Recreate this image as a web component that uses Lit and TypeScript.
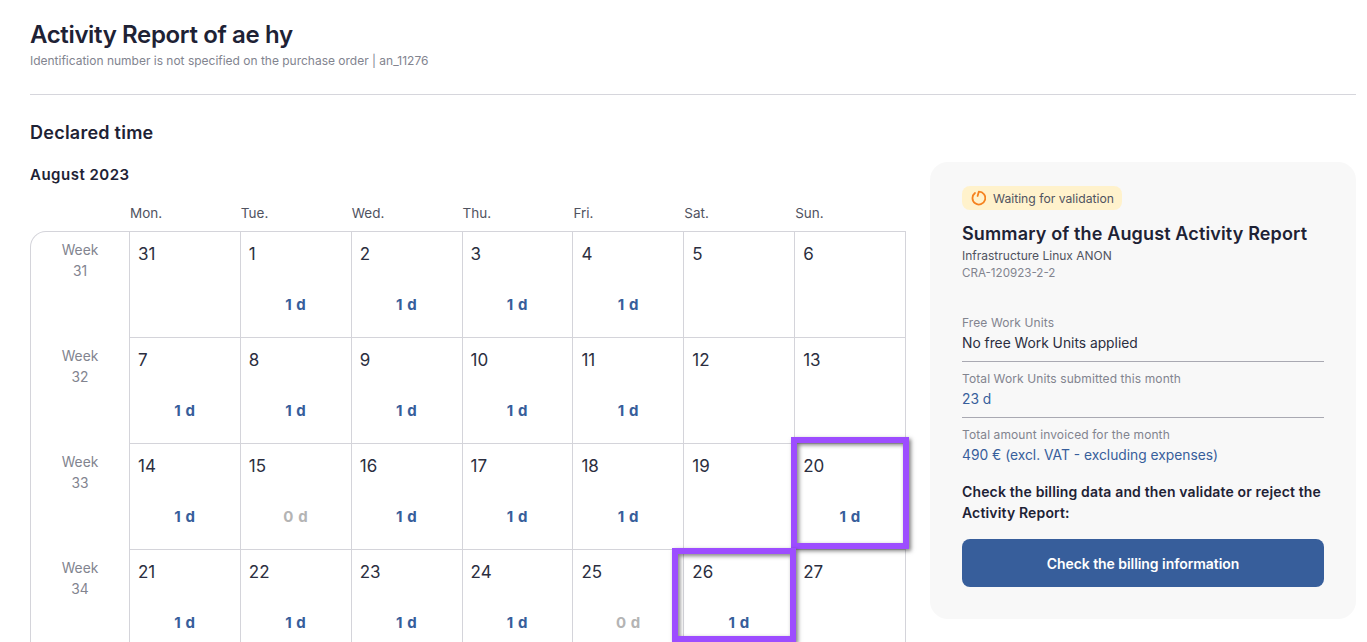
import { LitElement, html, css } from "lit";
import { customElement } from "lit/decorators.js";

type Cell = { n: number; v?: string };
const weeks: { w: number; days: Cell[] }[] = [
  { w: 31, days: [{ n: 31 }, { n: 1, v: "1 d" }, { n: 2, v: "1 d" }, { n: 3, v: "1 d" }, { n: 4, v: "1 d" }, { n: 5 }, { n: 6 }] },
  { w: 32, days: [{ n: 7, v: "1 d" }, { n: 8, v: "1 d" }, { n: 9, v: "1 d" }, { n: 10, v: "1 d" }, { n: 11, v: "1 d" }, { n: 12 }, { n: 13 }] },
  { w: 33, days: [{ n: 14, v: "1 d" }, { n: 15, v: "0 d" }, { n: 16, v: "1 d" }, { n: 17, v: "1 d" }, { n: 18, v: "1 d" }, { n: 19 }, { n: 20, v: "1 d" }] },
  { w: 34, days: [{ n: 21, v: "1 d" }, { n: 22, v: "1 d" }, { n: 23, v: "1 d" }, { n: 24, v: "1 d" }, { n: 25, v: "0 d" }, { n: 26, v: "1 d" }, { n: 27 }] },
];
const heads = ["Mon.", "Tue.", "Wed.", "Thu.", "Fri.", "Sat.", "Sun."];

@customElement("app-root")
export class AppRoot extends LitElement {
  static styles = css`
    :host { display: block; height: 642px; overflow: hidden; position: relative; background: #fff; font-family: Inter, "Noto Sans", sans-serif; color: #1e2235; }
    .page { padding: 20px 11px 0 30px; }
    h1 { margin: 0; font-size: 24px; line-height: 30px; font-weight: 600; letter-spacing: -0.36px; }
    .sub { font-size: 12px; line-height: 16px; color: #82848f; margin-top: 3px; letter-spacing: -0.01px; }
    hr { border: 0; border-top: 1px solid #d6d6dc; margin: 25px 0 0; }
    h2 { margin: 27px 0 0; font-size: 18px; line-height: 22px; font-weight: 600; letter-spacing: 0.25px; }
    .cols { display: grid; grid-template-columns: 876px 426px; gap: 24px; margin-top: 18px; align-items: start; }
    h3 { margin: 3px 0 0; font-size: 15px; line-height: 20px; font-weight: 600; letter-spacing: 0.5px; }
    .heads { display: grid; grid-template-columns: 99px repeat(7, 110.86px); margin-top: 19px; font-size: 13.5px; line-height: 18px; color: #50535f; }
    .heads span { padding-left: 1px; }
    .grid { display: grid; grid-template-columns: 98px repeat(7, 110.86px); width: 876px; box-sizing: border-box; margin-top: 9px; border-top: 1px solid #d4d4da; border-left: 1px solid #d4d4da; border-right: 1px solid #d4d4da; border-top-left-radius: 16px; }
    .week { grid-column: 1; height: 106px; text-align: center; font-size: 13.8px; line-height: 21px; color: #82848f; padding-top: 8px; box-sizing: border-box; }
    .day { height: 106px; box-sizing: border-box; border-left: 1px solid #d4d4da; border-bottom: 1px solid #d4d4da; padding: 10px 8px; position: relative; font-size: 17px; line-height: 24px; color: #2b2e40; }
    .val { position: absolute; left: 0; right: 0; top: 63px; text-align: center; font-size: 15px; line-height: 20px; font-weight: 700; color: #375e9b; letter-spacing: 0.6px; }
    .val.zero { color: #b4b4b4; }
    .panel { background: #f8f8f8; border-radius: 18px; padding: 24px 32px 32px; height: 457px; box-sizing: border-box; }
    .badge { display: inline-flex; align-items: center; gap: 7px; background: #fff2cc; border-radius: 8px; height: 24px; padding: 0 8px; font-size: 12.2px; color: #50535f; }
    .badge svg { display: block; }
    .ptitle { margin: 12px 0 0; font-size: 18px; line-height: 24px; font-weight: 600; letter-spacing: 0.14px; }
    .l1 { font-size: 12px; line-height: 18px; color: #50535f; margin-top: 1px; }
    .l2 { font-size: 11.6px; line-height: 18px; color: #82848f; margin-top: -1px; }
    .fields { margin-top: 33px; }
    .f { border-bottom: 1px solid #a9a9b2; padding-bottom: 8px; margin-bottom: 9px; }
    .f:last-child { border: 0; margin: 0; padding: 0; }
    .f .k { font-size: 12px; line-height: 16px; color: #82848f; letter-spacing: 0.1px; }
    .f .v { font-size: 13.8px; line-height: 20px; margin-top: 2px; color: #2b2e40; }
    .f .v.b { color: #375e9b; }
    .note { font-size: 14px; line-height: 21px; font-weight: 600; margin-top: 16px; letter-spacing: 0.15px; }
    .btn { display: flex; align-items: center; justify-content: center; height: 48px; margin-top: 16px; background: #375e9b; color: #fff; border-radius: 8px; font-size: 14px; font-weight: 600; letter-spacing: -0.06px; }
    .mark { position: absolute; box-sizing: border-box; border: 6px solid #9d4dff; box-shadow: 2px 2px 4px rgba(0,0,0,.5), inset 2px 2px 4px rgba(0,0,0,.5); pointer-events: none; }
    .m1 { left: 791px; top: 437px; width: 118px; height: 112px; }
    .m2 { left: 672px; top: 548px; width: 124px; height: 94px; }
  `;

  render() {
    return html`
      <div class="page">
        <h1>Activity Report of ae hy</h1>
        <div class="sub">Identification number is not specified on the purchase order | an_11276</div>
        <hr />
        <h2>Declared time</h2>
        <div class="cols">
          <div>
            <h3>August 2023</h3>
            <div class="heads"><span></span>${heads.map((h) => html`<span>${h}</span>`)}</div>
            <div class="grid">
              ${weeks.map(
                (w) => html`
                  <div class="week">Week<br />${w.w}</div>
                  ${w.days.map(
                    (d) => html`<div class="day">${d.n}${d.v ? html`<div class="val ${d.v === "0 d" ? "zero" : ""}">${d.v}</div>` : ""}</div>`
                  )}
                `
              )}
            </div>
          </div>
          <aside class="panel">
            <div class="badge">
              <svg width="16" height="16" viewBox="0 0 16 16" fill="none" stroke="#f5821f" stroke-width="1.8" stroke-linecap="round" stroke-linejoin="round">
                <path d="M5 3A6.4 6.4 0 1 0 8.8 1.7L7.6 6" />
              </svg>
              Waiting for validation
            </div>
            <div class="ptitle">Summary of the August Activity Report</div>
            <div class="l1">Infrastructure Linux ANON</div>
            <div class="l2">CRA-120923-2-2</div>
            <div class="fields">
              <div class="f"><div class="k">Free Work Units</div><div class="v">No free Work Units applied</div></div>
              <div class="f"><div class="k">Total Work Units submitted this month</div><div class="v b">23 d</div></div>
              <div class="f"><div class="k">Total amount invoiced for the month</div><div class="v b">490 € (excl. VAT - excluding expenses)</div></div>
            </div>
            <div class="note">Check the billing data and then validate or reject the Activity Report:</div>
            <div class="btn">Check the billing information</div>
          </aside>
        </div>
      </div>
      <div class="mark m1"></div>
      <div class="mark m2"></div>
    `;
  }
}
